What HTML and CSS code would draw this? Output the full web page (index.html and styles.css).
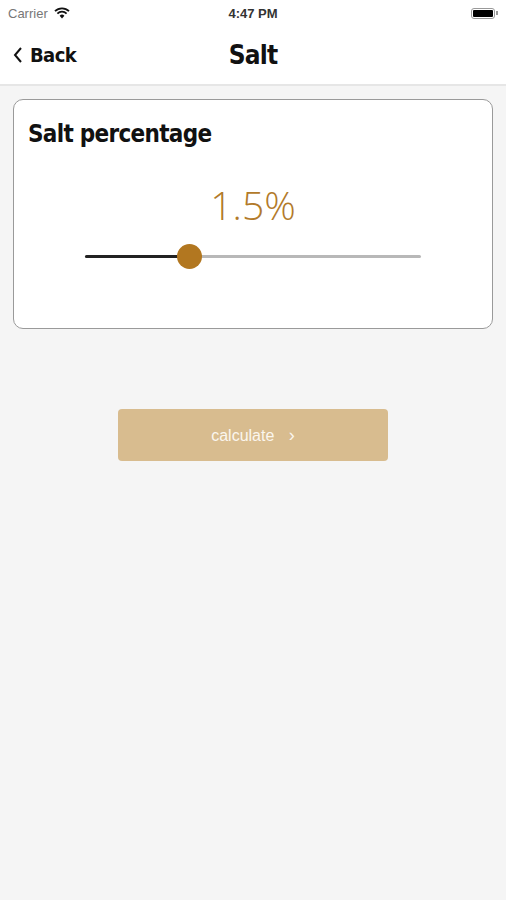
FILE: index.html
```html
<!DOCTYPE html>
<html lang="en">
<head>
  <meta charset="UTF-8">
  <title>Salt</title>
  <link rel="stylesheet" href="styles.css">
</head>
<body>

  <div class="status-bar">
    <div class="status-left">
      <span>Carrier</span>
      <svg class="wifi" width="16" height="12" viewBox="0 0 16 12">
        <path d="M8 11.5 L5.6 8.8 A3.4 3.4 0 0 1 10.4 8.8 Z" fill="#111"/>
        <path d="M3.4 6.6 A6.5 6.5 0 0 1 12.6 6.6" stroke="#111" stroke-width="1.8" fill="none"/>
        <path d="M1 4.2 A10 10 0 0 1 15 4.2" stroke="#111" stroke-width="1.8" fill="none"/>
      </svg>
    </div>
    <div class="status-time">4:47 PM</div>
    <div class="status-right">
      <div class="battery"><div class="battery-level"></div></div>
      <div class="battery-tip"></div>
    </div>
  </div>

  <div class="nav-bar">
    <div class="nav-back">
      <svg width="10" height="18" viewBox="0 0 10 18">
        <path d="M8 2 L2 9 L8 16" stroke="#111" stroke-width="2" fill="none"/>
      </svg>
      <span>Back</span>
    </div>
    <div class="nav-title">Salt</div>
  </div>

  <div class="content">
    <div class="card">
      <h2>Salt percentage</h2>
      <div class="value">1.5%</div>
      <div class="slider">
        <div class="track">
          <div class="fill" style="width: 31%"></div>
          <div class="thumb" style="left: 31%"></div>
        </div>
      </div>
    </div>

    <button class="calc-btn">calculate <span class="arrow">&rsaquo;</span></button>
  </div>

</body>
</html>
```

FILE: styles.css
```css
body {
  margin: 0;
  background-color: #f5f5f5;
  font-family: "Liberation Sans", Arial, sans-serif;
  height: 900px;
}

.status-bar {
  background: #fff;
  height: 26px;
  display: flex;
  align-items: center;
  justify-content: space-between;
  padding: 0 8px;
  font-size: 13px;
  position: relative;
}

.status-left {
  display: flex;
  align-items: center;
  gap: 6px;
  color: #777;
}

.status-time {
  position: absolute;
  left: 0;
  right: 0;
  text-align: center;
  font-weight: bold;
  color: #333;
}

.status-right {
  display: flex;
  align-items: center;
}

.battery {
  width: 24px;
  height: 11px;
  border: 1px solid #999;
  border-radius: 3px;
  padding: 1px;
  box-sizing: border-box;
}

.battery-level {
  background: #000;
  height: 100%;
  border-radius: 1px;
}

.battery-tip {
  width: 2px;
  height: 4px;
  background: #999;
  margin-left: 1px;
}

.nav-bar {
  background: #fff;
  height: 58px;
  border-bottom: 2px solid #e6e6e6;
  display: flex;
  align-items: center;
  position: relative;
  font-family: "DejaVu Sans Condensed", sans-serif;
}

.nav-back {
  display: flex;
  align-items: center;
  gap: 7px;
  padding-left: 13px;
  font-size: 20px;
  font-weight: bold;
  letter-spacing: -0.6px;
  color: #111;
}

.nav-title {
  position: absolute;
  left: 0;
  right: 0;
  text-align: center;
  font-size: 26px;
  font-weight: bold;
  letter-spacing: -0.8px;
  color: #111;
  pointer-events: none;
}

.content {
  padding: 13px 13px;
  display: flex;
  flex-direction: column;
  align-items: center;
}

.card {
  align-self: stretch;
  box-sizing: border-box;
  background: #fff;
  border: 1px solid #9a9a9a;
  border-radius: 10px;
  height: 230px;
  padding: 20px 14px 0;
}

.card h2 {
  margin: 0;
  font-family: "DejaVu Sans Condensed", sans-serif;
  font-size: 24px;
  font-weight: bold;
  letter-spacing: -0.7px;
  color: #111;
}

.value {
  margin-top: 30px;
  text-align: center;
  font-size: 39px;
  font-weight: 300;
  font-family: "Open Sans", "Liberation Sans", sans-serif;
  color: #b27a2a;
}

.slider {
  padding: 24px 57px 0;
}

.track {
  position: relative;
  height: 3px;
  background: #b8b8b8;
  border-radius: 2px;
}

.fill {
  height: 100%;
  background: #222;
  border-radius: 2px;
}

.thumb {
  position: absolute;
  top: -11px;
  width: 25px;
  height: 25px;
  margin-left: -12px;
  border-radius: 50%;
  background: #b27720;
}

.calc-btn {
  margin-top: 80px;
  width: 270px;
  height: 52px;
  border: none;
  border-radius: 4px;
  background: #d8bc8f;
  color: #fbf6ee;
  font-family: "Liberation Sans", Arial, sans-serif;
  font-size: 16px;
}

.calc-btn .arrow {
  margin-left: 10px;
  font-size: 18px;
}
```
